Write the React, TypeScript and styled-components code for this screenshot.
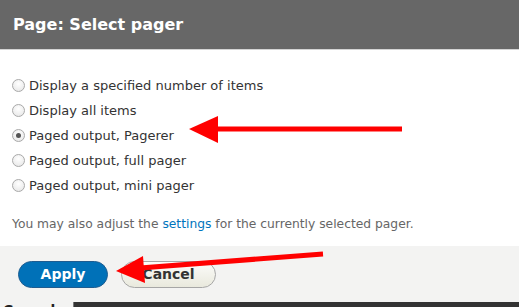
import styled, { createGlobalStyle } from 'styled-components';

const GlobalStyle = createGlobalStyle`
  html, body {
    margin: 0;
    padding: 0;
    background: #333333;
  }
  body {
    font-family: "DejaVu Sans", "Liberation Sans", sans-serif;
  }
`;

const Dialog = styled.div`
  position: relative;
  width: 519px;
  height: 307px;
  overflow: hidden;
  display: flex;
  flex-direction: column;
  background: #ffffff;
`;

const TitleBar = styled.div`
  flex: 0 0 auto;
  height: 49px;
  background: #676767;
  border-bottom: 1px solid #d4d4d4;
  display: flex;
  align-items: center;
  padding: 0 13px;
  box-sizing: content-box;
`;

const Title = styled.h1`
  margin: 0;
  color: #ffffff;
  font-size: 16px;
  font-weight: bold;
`;

const Body = styled.div`
  flex: 0 0 196px;
  padding: 23px 12px 0 12px;
  box-sizing: border-box;
`;

const RadioList = styled.div`
  display: flex;
  flex-direction: column;
`;

const RadioRow = styled.label`
  display: flex;
  align-items: center;
  height: 25px;
  font-size: 13px;
  color: #333333;
`;

const RadioDot = styled.span<{ $checked?: boolean }>`
  width: 11px;
  height: 11px;
  border-radius: 50%;
  border: 1px solid #a9a9a9;
  background: radial-gradient(circle at 50% 35%, #ffffff 0%, #e4e4e4 100%);
  margin: 0 4px 0 0;
  display: flex;
  align-items: center;
  justify-content: center;
  &::after {
    content: '';
    display: ${({ $checked }) => ($checked ? 'block' : 'none')};
    width: 5px;
    height: 5px;
    border-radius: 50%;
    background: #555555;
  }
`;

const Note = styled.p`
  margin: 19px 0 0 0;
  font-size: 12.3px;
  color: #666666;
`;

const Link = styled.a`
  color: #0074bd;
  text-decoration: none;
`;

const Footer = styled.div`
  flex: 0 0 56px;
  background: #f3f3f2;
  display: flex;
  align-items: center;
  gap: 13px;
  padding: 0 18px;
  box-sizing: border-box;
`;

const Button = styled.button<{ $primary?: boolean }>`
  height: 27px;
  padding: 0 20px;
  border-radius: 14px;
  font-family: "DejaVu Sans", "Liberation Sans", sans-serif;
  font-size: 14px;
  font-weight: bold;
  ${({ $primary }) =>
    $primary
      ? `
    background: #0071b8;
    border: 1px solid #1e5c90;
    color: #ffffff;
    width: 90px;
  `
      : `
    background: linear-gradient(#fcfcfa, #e9e9dd);
    border: 1px solid #a6a6a6;
    color: #333333;
    width: 95px;
  `}
`;

const BottomStrip = styled.div`
  flex: 1 1 auto;
  min-height: 0;
  display: flex;
  background: #333333;
`;

const BehindTab = styled.div`
  width: 70px;
  background: #f3f3f2;
  border-right: 1px solid #777;
  font-size: 14px;
  font-weight: bold;
  color: #222;
  line-height: 14px;
  padding: 1px 0 0 3px;
  overflow: hidden;
`;

const ArrowLayer = styled.svg`
  position: absolute;
  left: 0;
  top: 0;
  pointer-events: none;
`;

const options = [
  'Display a specified number of items',
  'Display all items',
  'Paged output, Pagerer',
  'Paged output, full pager',
  'Paged output, mini pager',
];

const App = () => {
  return (
    <>
      <GlobalStyle />
      <Dialog>
        <TitleBar>
          <Title>Page: Select pager</Title>
        </TitleBar>
        <Body>
          <RadioList>
            {options.map((opt) => (
              <RadioRow key={opt}>
                <RadioDot $checked={opt === 'Paged output, Pagerer'} />
                {opt}
              </RadioRow>
            ))}
          </RadioList>
          <Note>
            You may also adjust the <Link href="#">settings</Link> for the currently selected pager.
          </Note>
        </Body>
        <Footer>
          <Button $primary>Apply</Button>
          <Button>Cancel</Button>
        </Footer>
        <BottomStrip>
          <BehindTab>Cancel</BehindTab>
        </BottomStrip>
        <ArrowLayer width="519" height="307" viewBox="0 0 519 307">
          <line x1="402" y1="129" x2="214" y2="129" stroke="#ff0000" strokeWidth="5" />
          <polygon points="189,129 218,116 218,143" fill="#ff0000" />
          <line x1="323" y1="254" x2="140" y2="268" stroke="#ff0000" strokeWidth="5" />
          <polygon points="116,271 143,256 145,283" fill="#ff0000" />
        </ArrowLayer>
      </Dialog>
    </>
  );
};

export default App;
